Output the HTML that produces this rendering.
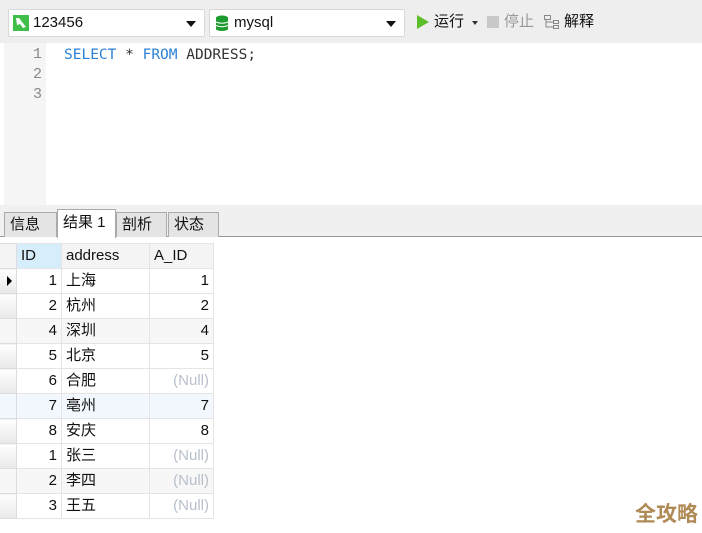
<!DOCTYPE html>
<html><head><meta charset="utf-8"><style>
*{margin:0;padding:0;box-sizing:border-box}
body{width:702px;height:533px;background:#fff;position:relative;overflow:hidden;font-family:"Liberation Sans","Noto Sans CJK SC",sans-serif;font-size:15px;color:#111}
.tb{position:absolute;left:0;top:0;width:702px;height:43px;background:#eeeeee}
.sel{position:absolute;top:9px;height:28px;background:#fff;border:1px solid #d8d8d8;border-radius:2px}
.sel span{position:absolute;left:24px;top:4px;line-height:18px}
.arr{position:absolute;right:8px;top:11px;width:0;height:0;border-left:5px solid transparent;border-right:5px solid transparent;border-top:6px solid #111}
.abs{position:absolute;line-height:18px}
.ed{position:absolute;left:0;top:43px;width:702px;height:162px;background:#fff}
.gut{position:absolute;left:4px;top:0;width:42px;height:162px;background:#f5f5f5}
.ln{position:absolute;right:4px;color:#888;font-family:"Liberation Mono",monospace;font-size:15px;line-height:20px}
.code{position:absolute;left:64px;top:2px;font-family:"DejaVu Sans Mono","Liberation Mono",monospace;font-size:14.5px;line-height:20px;color:#333}
.kw{color:#2a7fd4}
.strip{position:absolute;left:0;top:205px;width:702px;height:32px;background:#f0f0f0;border-bottom:1px solid #999}
.tab{position:absolute;top:212px;height:25px;background:#e4e4e4;border:1px solid #aaa;border-bottom:none;padding:3px 0 0 5px;font-size:15px;line-height:18px}
table{position:absolute;left:0;top:243px;border-collapse:collapse;table-layout:fixed}
td{height:25px;max-height:25px;border:1px solid #e4e4e4;padding:0 4px;font-size:15px;line-height:20px;overflow:hidden;white-space:nowrap}
td.i{padding:0;background:linear-gradient(#fff,#e8e8e8);border-color:#ddd;border-left:none}
td.n{text-align:right}
.null{color:#b8c0cc}
tr.h td{background:#f4f4f4}
tr.s td{background:#f7f7f7}
tr.b td{background:#f2f8fd}
</style></head><body>
<div class="tb">
 <div class="sel" style="left:8px;width:197px">
  <svg class="abs" style="left:4px;top:5px" width="16" height="16"><rect width="16" height="16" fill="#3fbf4a"/><path d="M3 3 L6 3 L13 12 L10 13 L7 9 L4 10 Z" fill="#fff"/></svg>
  <span>123456</span><div class="arr"></div></div>
 <div class="sel" style="left:209px;width:196px">
  <svg class="abs" style="left:5px;top:5px" width="14" height="16"><ellipse cx="7" cy="3" rx="6" ry="2.5" fill="#1e9b2e"/><rect x="1" y="3" width="12" height="11" fill="#1e9b2e"/><ellipse cx="7" cy="14" rx="6" ry="2" fill="#1e9b2e"/><path d="M1 7 Q7 9.5 13 7 M1 10.5 Q7 13 13 10.5" stroke="#fff" fill="none"/></svg>
  <span>mysql</span><div class="arr"></div></div>
 <svg class="abs" style="left:417px;top:15px" width="12" height="14"><path d="M0 0 L12 7 L0 14Z" fill="#5cbf2a"/></svg>
 <span class="abs" style="left:434px;top:13px">运行</span>
 <div class="abs" style="left:472px;top:21px;border-left:3px solid transparent;border-right:3px solid transparent;border-top:4px solid #333"></div>
 <div class="abs" style="left:487px;top:16px;width:12px;height:12px;background:#c8c8c8"></div>
 <span class="abs" style="left:504px;top:13px;color:#999">停止</span>
 <svg class="abs" style="left:543px;top:14px" width="18" height="16" fill="none" stroke="#888"><rect x="1.5" y="1.5" width="6" height="4"/><rect x="10.5" y="6.5" width="5" height="3"/><rect x="10.5" y="11.5" width="5" height="3"/><path d="M3 6 V13 H10 M3 8 H10"/></svg>
 <span class="abs" style="left:564px;top:13px">解释</span>
</div>
<div class="ed"><div class="gut">
 <span class="ln" style="top:2px">1</span><span class="ln" style="top:22px">2</span><span class="ln" style="top:42px">3</span></div>
 <div class="code"><span class="kw">SELECT</span> * <span class="kw">FROM</span> ADDRESS;</div></div>
<div class="strip"></div>
<div class="tab" style="left:4px;width:53px">信息</div>
<div class="tab" style="left:57px;top:209px;height:29px;width:59px;background:#fff;padding-top:4px">结果 1</div>
<div class="tab" style="left:116px;width:51px">剖析</div>
<div class="tab" style="left:168px;width:51px">状态</div>
<table>
<colgroup><col style="width:16px"><col style="width:45px"><col style="width:88px"><col style="width:64px"></colgroup>
<tr class="h"><td class="i" style="background:#f4f4f4"></td><td style="background:#d6eefb">ID</td><td>address</td><td>A_ID</td></tr>
<tr><td class="i"><svg width="16" height="20" style="display:block"><path d="M7 5 L12 10 L7 15Z" fill="#000"/></svg></td><td class="n">1</td><td>上海</td><td class="n">1</td></tr>
<tr><td class="i"></td><td class="n">2</td><td>杭州</td><td class="n">2</td></tr>
<tr class="s"><td class="i"></td><td class="n">4</td><td>深圳</td><td class="n">4</td></tr>
<tr><td class="i"></td><td class="n">5</td><td>北京</td><td class="n">5</td></tr>
<tr><td class="i"></td><td class="n">6</td><td>合肥</td><td class="n null">(Null)</td></tr>
<tr class="b"><td class="i"></td><td class="n">7</td><td>亳州</td><td class="n">7</td></tr>
<tr><td class="i"></td><td class="n">8</td><td>安庆</td><td class="n">8</td></tr>
<tr><td class="i"></td><td class="n">1</td><td>张三</td><td class="n null">(Null)</td></tr>
<tr class="s"><td class="i"></td><td class="n">2</td><td>李四</td><td class="n null">(Null)</td></tr>
<tr><td class="i"></td><td class="n">3</td><td>王五</td><td class="n null">(Null)</td></tr>
</table>
<div class="abs" style="left:635px;top:502px;font-size:21px;font-weight:bold;color:#b08a55;line-height:26px">全攻略</div>
</body></html>
